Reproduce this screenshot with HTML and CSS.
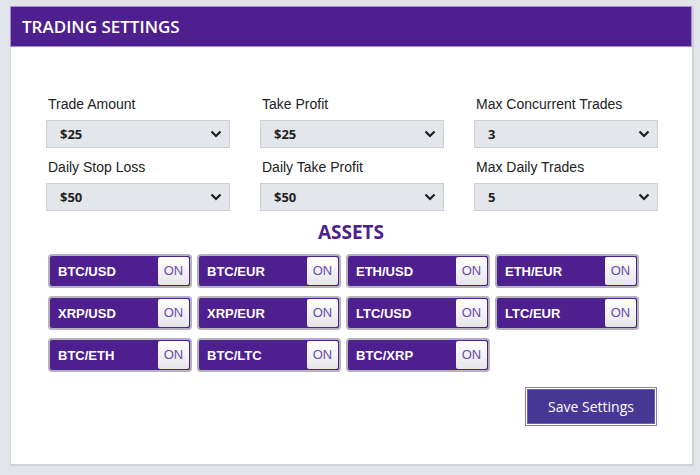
FILE: index.html
```html
<!DOCTYPE html>
<html lang="en">
<head>
	<meta charset="UTF-8">
	<title>Trading Settings</title>
	<link rel="stylesheet" href="styles.css">
</head>
<body>
	<div id="panel">
		<div id="header">TRADING SETTINGS</div>

		<div id="content">
			<div id="fields">
				<div class="field">
					<div class="label">Trade Amount</div>
					<div class="select"><span>$25</span><svg width="12" height="8" viewBox="0 0 12 8"><polyline points="1.5,1.5 6,6 10.5,1.5"/></svg></div>
				</div>
				<div class="field">
					<div class="label">Take Profit</div>
					<div class="select"><span>$25</span><svg width="12" height="8" viewBox="0 0 12 8"><polyline points="1.5,1.5 6,6 10.5,1.5"/></svg></div>
				</div>
				<div class="field">
					<div class="label">Max Concurrent Trades</div>
					<div class="select"><span>3</span><svg width="12" height="8" viewBox="0 0 12 8"><polyline points="1.5,1.5 6,6 10.5,1.5"/></svg></div>
				</div>
				<div class="field">
					<div class="label">Daily Stop Loss</div>
					<div class="select"><span>$50</span><svg width="12" height="8" viewBox="0 0 12 8"><polyline points="1.5,1.5 6,6 10.5,1.5"/></svg></div>
				</div>
				<div class="field">
					<div class="label">Daily Take Profit</div>
					<div class="select"><span>$50</span><svg width="12" height="8" viewBox="0 0 12 8"><polyline points="1.5,1.5 6,6 10.5,1.5"/></svg></div>
				</div>
				<div class="field">
					<div class="label">Max Daily Trades</div>
					<div class="select"><span>5</span><svg width="12" height="8" viewBox="0 0 12 8"><polyline points="1.5,1.5 6,6 10.5,1.5"/></svg></div>
				</div>
			</div>

			<div id="assets-title">ASSETS</div>

			<div id="assets">
				<div class="asset"><span class="name">BTC/USD</span><span class="on">ON</span></div>
				<div class="asset"><span class="name">BTC/EUR</span><span class="on">ON</span></div>
				<div class="asset"><span class="name">ETH/USD</span><span class="on">ON</span></div>
				<div class="asset"><span class="name">ETH/EUR</span><span class="on">ON</span></div>
				<div class="asset"><span class="name">XRP/USD</span><span class="on">ON</span></div>
				<div class="asset"><span class="name">XRP/EUR</span><span class="on">ON</span></div>
				<div class="asset"><span class="name">LTC/USD</span><span class="on">ON</span></div>
				<div class="asset"><span class="name">LTC/EUR</span><span class="on">ON</span></div>
				<div class="asset"><span class="name">BTC/ETH</span><span class="on">ON</span></div>
				<div class="asset"><span class="name">BTC/LTC</span><span class="on">ON</span></div>
				<div class="asset"><span class="name">BTC/XRP</span><span class="on">ON</span></div>
			</div>

			<div id="actions">
				<div class="save">Save Settings</div>
			</div>
		</div>
	</div>
</body>
</html>
```

FILE: styles.css
```css
*{
	padding: 0;
	margin: 0;
	box-sizing: border-box;
}
body{
	background-color: #e1e5e9;
	font-family: "Liberation Sans", Arial, sans-serif;
}
#panel{
	margin: 6px 0 0 10px;
	width: 684px;
	height: 460px;
	background-color: white;
	border-right: 2px solid #cfd2d6;
	border-bottom: 2px solid #cfd2d6;
	border-left: 1px solid #d6d8dc;
}
#header{
	height: 41px;
	margin-left: -1px;
	background-color: #4e1f8e;
	border: 1px solid #a58ad6;
	color: white;
	font-family: "Open Sans", sans-serif;
	font-weight: 600;
	font-size: 17px;
	line-height: 39px;
	padding-left: 11px;
}
#content{
	padding: 47px 0 0 35px;
	width: 647px;
}
#fields{
	display: grid;
	grid-template-columns: 184px 184px 184px;
	column-gap: 30px;
	row-gap: 9px;
}
.label{
	font-size: 14px;
	line-height: 20px;
	color: #222;
	padding-left: 2px;
	margin-bottom: 6px;
}
.select{
	height: 28px;
	background-color: #e3e6ea;
	border: 1px solid #cdd1d5;
	display: flex;
	align-items: center;
	justify-content: space-between;
	padding: 0 7px 0 13px;
	font-family: "Open Sans", sans-serif;
	font-weight: 700;
	font-size: 13px;
	color: #222;
}
.select svg polyline{
	fill: none;
	stroke: #1e1e1e;
	stroke-width: 2.2;
}
#assets-title{
	margin-top: 9px;
	text-align: center;
	width: 610px;
	height: 24px;
	line-height: 24px;
	font-family: "Open Sans", sans-serif;
	font-weight: 700;
	font-size: 19px;
	color: #4e1f8e;
}
#assets{
	margin: 10px 0 0 2px;
	display: grid;
	grid-template-columns: repeat(4, 144px);
	column-gap: 5px;
	row-gap: 8px;
}
.asset{
	height: 34px;
	border: 2px solid #b4b2bb;
	border-radius: 4px;
	background-color: #4e1f8e;
	display: flex;
	align-items: center;
	justify-content: space-between;
	padding: 1px 1px 1px 8px;
}
.asset .name{
	color: white;
	font-weight: bold;
	font-size: 13px;
}
.asset .on{
	width: 31px;
	height: 100%;
	border-radius: 2px;
	background: linear-gradient(#ffffff, #e6e6e9);
	color: #6a4cab;
	font-size: 13px;
	text-align: center;
	line-height: 28px;
}
#actions{
	width: 612px;
	margin-top: 15px;
	display: flex;
	justify-content: flex-end;
}
.save{
	width: 132px;
	height: 39px;
	margin-right: 1px;
	background-color: #483896;
	border: 1px solid #8779cf;
	box-shadow: inset 0 0 0 1px white, inset 0 0 0 2px #6a5cba;
	color: white;
	font-family: "Open Sans", sans-serif;
	font-size: 14px;
	text-align: center;
	line-height: 37px;
}
```
